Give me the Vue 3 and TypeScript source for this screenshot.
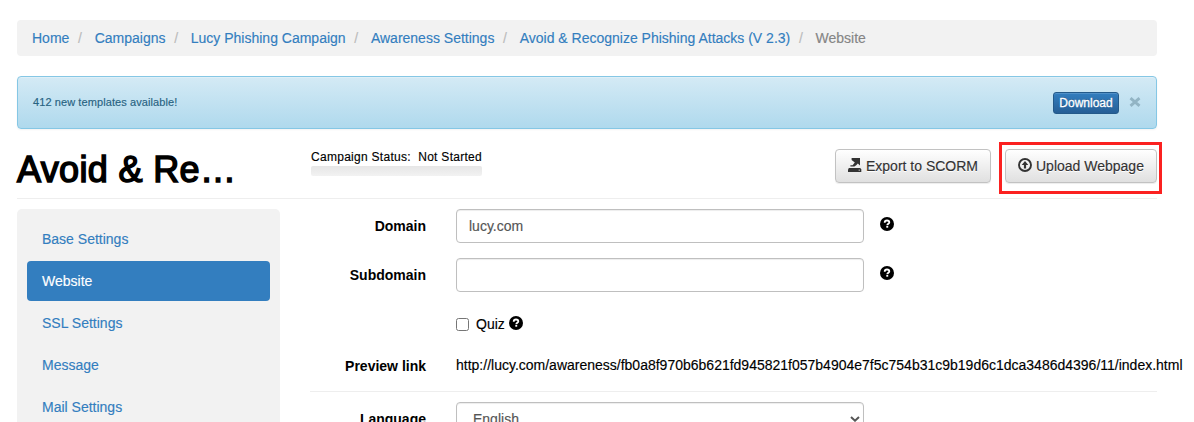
<script setup lang="ts">
import { ref } from 'vue'

const crumbs: string[] = [
  'Home',
  'Campaigns',
  'Lucy Phishing Campaign',
  'Awareness Settings',
  'Avoid & Recognize Phishing Attacks (V 2.3)',
]
const menu: string[] = ['Base Settings', 'Website', 'SSL Settings', 'Message', 'Mail Settings']
const active = ref('Website')
const domain = ref('lucy.com')
const subdomain = ref('')
const quiz = ref(false)
</script>

<template>
  <div class="page">
    <svg class="defs" width="0" height="0">
      <symbol id="help" viewBox="0 0 14 14">
        <circle cx="7" cy="7" r="7" fill="currentColor" />
        <path d="M4.7 5.7C4.7 4.3 5.6 3.5 7 3.5S9.3 4.3 9.3 5.4C9.3 6.7 7.3 6.8 7.3 8.2" fill="none" stroke="#fff" stroke-width="1.8" />
        <rect x="6.3" y="9" width="1.9" height="1.7" fill="#fff" />
      </symbol>
    </svg>

    <ol class="breadcrumb">
      <li v-for="c in crumbs" :key="c"><a>{{ c }}</a></li>
      <li class="current">Website</li>
    </ol>

    <div class="alert">
      <span class="message">412 new templates available!</span>
      <button class="download">Download</button>
      <svg class="close" width="12" height="10" viewBox="0 0 12 10"><path d="M1.5 1.2L10.5 8.8M10.5 1.2L1.5 8.8" stroke="currentColor" stroke-width="2.9" /></svg>
    </div>

    <header class="head">
      <h1>Avoid &amp; Re…</h1>
      <div class="status">
        <div class="status-text"><span>Campaign Status:</span><span>Not Started</span></div>
        <div class="progress"></div>
      </div>
      <div class="actions">
        <button class="btn export">
          <svg width="14" height="14" viewBox="0 0 14 14" fill="currentColor">
            <path d="M.9 10h11.4l1 1.6V14H0v-2.4z" />
            <path d="M3.6 0H12v7.6L9.8 5.6 8.2 7.2 6.4 8.6H2.4V7.2H4.6L6.8 4.4 3.6 2z" />
            <path d="M10.6 11.8h1.4v.8h-1.4z" fill="#eee" />
          </svg>
          <span>Export to SCORM</span>
        </button>
        <div class="highlight">
          <button class="btn upload">
            <svg width="14" height="14" viewBox="0 0 14 14">
              <circle cx="7" cy="7" r="6" fill="none" stroke="currentColor" stroke-width="1.9" />
              <path d="M7 3l3.3 4H8.1v3.6H5.9V7H3.7z" fill="currentColor" />
            </svg>
            <span>Upload Webpage</span>
          </button>
        </div>
      </div>
    </header>

    <div class="body">
      <nav class="sidebar">
        <a v-for="m in menu" :key="m" :class="{ active: m === active }" @click="active = m">{{ m }}</a>
      </nav>
      <main class="form">
        <div class="row">
          <label>Domain</label>
          <input v-model="domain" class="control" type="text" />
          <svg class="help" width="14" height="14"><use href="#help" /></svg>
        </div>
        <div class="row">
          <label>Subdomain</label>
          <input v-model="subdomain" class="control" type="text" />
          <svg class="help" width="14" height="14"><use href="#help" /></svg>
        </div>
        <div class="row quiz">
          <label></label>
          <input v-model="quiz" class="check" type="checkbox" />
          <span>Quiz</span>
          <svg width="14" height="14"><use href="#help" /></svg>
        </div>
        <div class="row preview">
          <label>Preview link</label>
          <span class="link">http://lucy.com/awareness/fb0a8f970b6b621fd945821f057b4904e7f5c754b31c9b19d6c1dca3486d4396/11/index.html</span>
        </div>
        <div class="row language">
          <label>Language</label>
          <div class="control select">
            <span>English</span>
            <svg width="10" height="6" viewBox="0 0 10 6"><path d="M1 1l4 3.7L9 1" fill="none" stroke="currentColor" stroke-width="2" /></svg>
          </div>
        </div>
      </main>
    </div>
  </div>
</template>

<style>
body {
  margin: 0;
  background: #fff;
  overflow: hidden;
}
</style>

<style scoped>
* {
  box-sizing: border-box;
}
.page {
  height: 422px;
  overflow: hidden;
  padding: 20px 37px 0 17px;
  font: 14px/20px "Liberation Sans", Arial, Helvetica, sans-serif;
  color: #000;
  -webkit-text-stroke: 0.15px currentColor;
}
.defs {
  position: absolute;
}
svg {
  display: block;
  flex: none;
}
button,
input {
  font: inherit;
  margin: 0;
}
.breadcrumb {
  display: flex;
  align-items: center;
  height: 36px;
  margin: 0 0 20px;
  padding: 0 15px;
  list-style: none;
  background: #f2f2f2;
  border-radius: 4px;
  white-space: nowrap;
}
.breadcrumb li {
  color: #858585;
}
.breadcrumb li + li::before {
  content: "/";
  display: inline-block;
  width: 16.6px;
  margin-left: 8.7px;
  color: #bbb;
}
a,
.breadcrumb a {
  color: #337ebf;
}
.alert {
  display: flex;
  align-items: center;
  height: 53px;
  padding: 0 15px 0 15px;
  border: 1px solid #85c7e5;
  border-radius: 4px;
  background: linear-gradient(#d4eaf5, #afd9ed);
  box-shadow: inset 0 1px 0 rgba(255, 255, 255, 0.25), 0 1px 2px rgba(0, 0, 0, 0.05);
  color: #31708f;
}
.message {
  flex: 1;
  padding-bottom: 2px;
  font-size: 11px;
  letter-spacing: 0.09px;
  color: #286382;
}
.download {
  width: 66px;
  height: 22px;
  padding: 0;
  border: 1px solid #245a8a;
  border-radius: 3px;
  background: linear-gradient(#337ebf, #265f96);
  box-shadow: inset 0 1px 0 rgba(255, 255, 255, 0.15);
  color: #fff;
  font-size: 12px;
  line-height: 20px;
  text-shadow: 0 -1px 0 rgba(0, 0, 0, 0.2);
  -webkit-text-stroke: 0.3px currentColor;
}
.close {
  margin: -1px 0 0 10px;
  color: #92b4c4;
}
.head {
  display: flex;
  height: 70px;
  border-bottom: 1px solid #eee;
}
h1 {
  width: 294px;
  margin: 21px 0 0;
  font-size: 36px;
  line-height: 40px;
  font-weight: normal;
  letter-spacing: 0.35px;
  white-space: nowrap;
  -webkit-text-stroke: 1.5px currentColor;
}
.status {
  width: 171px;
  padding-top: 18px;
}
.status-text {
  display: flex;
  justify-content: space-between;
  font-size: 12px;
  line-height: 20px;
  letter-spacing: 0.28px;
  white-space: nowrap;
}
.progress {
  height: 10px;
  margin-top: -1px;
  border-radius: 2px;
  background: linear-gradient(#e6e6e6, #f2f2f2);
}
.actions {
  display: flex;
  align-items: flex-start;
  margin: 13px -5px 0 auto;
}
.btn {
  display: flex;
  align-items: center;
  gap: 4px;
  height: 34px;
  padding: 0 12px;
  border: 1px solid #c2c2c2;
  border-radius: 4px;
  background: linear-gradient(#fff, #e0e0e0);
  box-shadow: inset 0 1px 0 rgba(255, 255, 255, 0.15), 0 1px 1px rgba(0, 0, 0, 0.075);
  color: #333;
  text-shadow: 0 1px 0 #fff;
  white-space: nowrap;
}
.btn svg {
  margin-top: -3px;
}
.export {
  width: 156px;
  margin: 7px 8px 0 0;
}
.highlight {
  width: 163px;
  height: 52px;
  border: 3px solid #fb2120;
  padding: 4px 2px 0 3px;
}
.upload {
  width: 152px;
}
.body {
  display: flex;
  align-items: flex-start;
  padding-top: 10px;
}
.sidebar {
  display: flex;
  flex: none;
  flex-direction: column;
  gap: 2px;
  width: 263px;
  height: 260px;
  margin-right: 30px;
  padding: 10px;
  border-radius: 5px;
  background: #f2f2f2;
}
.sidebar a {
  height: 40px;
  padding: 10px 15px;
  border-radius: 4px;
}
.sidebar .active {
  background: #337ebf;
  color: #fff;
}
.form {
  width: 847px;
}
.row {
  display: flex;
  height: 34px;
  margin-bottom: 15px;
}
.row label {
  flex: none;
  width: 116px;
  margin-right: 30px;
  padding-top: 7px;
  text-align: right;
  font-weight: bold;
  -webkit-text-stroke: 0;
}
.control {
  width: 408px;
  height: 34px;
  padding: 6px 12px;
  border: 1px solid #bfbfbf;
  border-radius: 4px;
  background: #fff;
  box-shadow: inset 0 1px 1px rgba(0, 0, 0, 0.075);
  color: #555;
  outline: none;
}
.help {
  margin: 8px 0 0 15.5px;
}
.quiz {
  height: 20px;
  margin: 22px 0 21px;
  align-items: center;
}
.check {
  appearance: none;
  width: 13px;
  height: 13px;
  margin: 1px 7px 0 0;
  border: 1px solid #767676;
  border-radius: 2.5px;
  background: #fff;
}
.quiz svg {
  margin: -2px 0 0 4px;
}
.preview {
  height: 37px;
  margin: 0 0 10px;
  border-bottom: 1px solid #eee;
}
.preview label {
  padding-top: 1px;
}
.link {
  white-space: nowrap;
}
.select {
  display: flex;
  align-items: center;
  justify-content: space-between;
  padding: 0 3px 0 16px;
}
</style>
